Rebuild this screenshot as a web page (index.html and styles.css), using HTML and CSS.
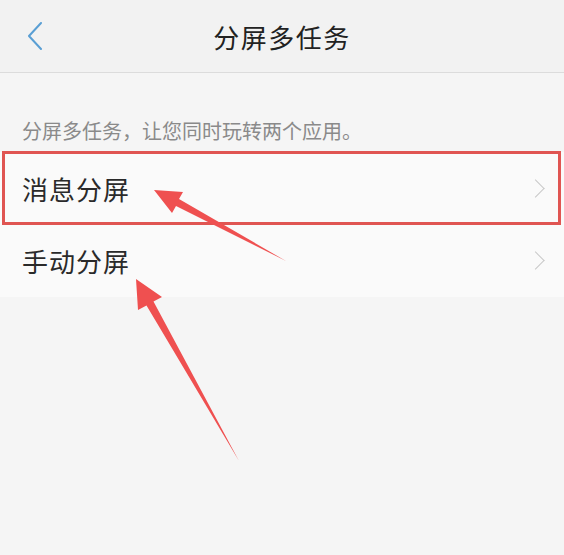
FILE: index.html
```html
<!DOCTYPE html>
<html lang="zh-CN">
  <head>
    <meta charset="UTF-8" />
    <meta name="viewport" content="width=device-width, initial-scale=1.0" />
    <title>分屏多任务</title>
    <link rel="stylesheet" href="styles.css">
  </head>
  <body>
    <div class="page">
      <header class="top-bar">
        <span class="back">
          <svg width="16" height="28" viewBox="0 0 16 28">
            <polyline points="14,1 2,14 14,27" fill="none" stroke="#5a9fd4" stroke-width="2" stroke-linecap="round" stroke-linejoin="round" />
          </svg>
        </span>
        <h1 class="title">分屏多任务</h1>
        <span></span>
      </header>

      <p class="note">分屏多任务，让您同时玩转两个应用。</p>

      <div class="list">
        <div class="row marked">
          <span>消息分屏</span>
          <span class="chevron"></span>
        </div>
        <div class="row">
          <span>手动分屏</span>
          <span class="chevron"></span>
        </div>
      </div>

      <!-- annotation arrows -->
      <svg class="arrows" width="564" height="555" viewBox="0 0 564 555">
        <polygon points="154,190 183,192 179,199 286,261 176,206 172,213" fill="#ef5050" />
        <polygon points="136,279 162,297 153.5,301.5 239,461 146.5,305.5 138,310" fill="#ef5050" />
      </svg>
    </div>
  </body>
</html>
```

FILE: styles.css
```css
* {
  margin: 0;
  padding: 0;
  box-sizing: border-box;
}

body {
  background: #f5f5f5;
  font-family: "Noto Sans CJK SC", "Noto Sans", sans-serif;
  color: #333;
}

.page {
  position: relative;
  width: 564px;
  height: 555px;
  overflow: hidden;
}

.top-bar {
  display: grid;
  grid-template-columns: 1fr auto 1fr;
  align-items: center;
  height: 73px;
  background: #f2f2f2;
  border-bottom: 1px solid #dcdcdc;
}

.back {
  display: flex;
  padding-left: 27px;
}

.title {
  font-size: 26px;
  font-weight: normal;
  color: #222;
  letter-spacing: 1.5px;
}

.note {
  padding: 43px 22px 7px;
  font-size: 20px;
  line-height: 29px;
  color: #8a8a8a;
}

.list {
  background: #fafafa;
}

.row {
  position: relative;
  display: flex;
  justify-content: space-between;
  align-items: center;
  height: 72px;
  padding: 0 18px 0 22px;
  font-size: 26px;
  letter-spacing: 1px;
  color: #2a2a2a;
}

.row + .row {
  height: 73px;
}

.row.marked::after {
  content: "";
  position: absolute;
  top: -1px;
  right: 3px;
  bottom: -1px;
  left: 2px;
  border: 3px solid #e05552;
}

.chevron {
  width: 13px;
  height: 13px;
  margin-right: 4px;
  border-top: 1.5px solid #c8c8c8;
  border-right: 1.5px solid #c8c8c8;
  transform: rotate(45deg);
}

.arrows {
  position: absolute;
  top: 0;
  left: 0;
}
```
